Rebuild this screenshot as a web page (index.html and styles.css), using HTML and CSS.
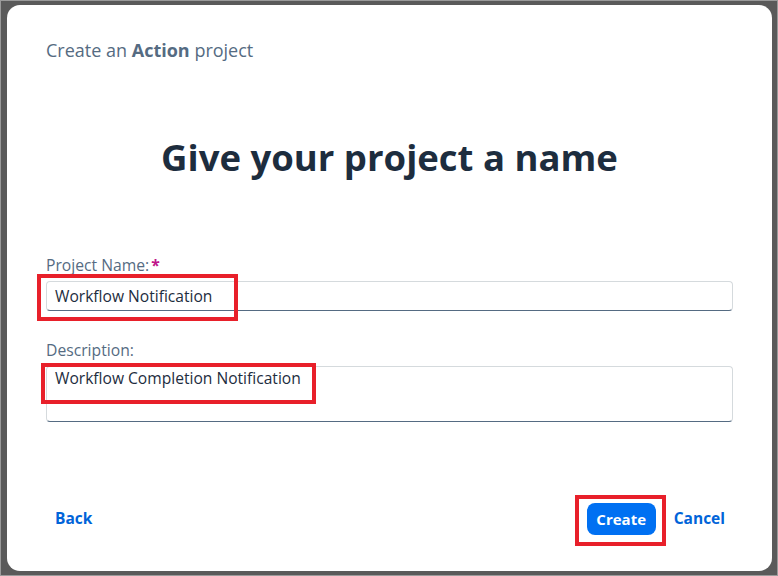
FILE: index.html
```html
<!DOCTYPE html>
<html lang="en">
<head>
<meta charset="utf-8">
<title>Create an Action project</title>
<link rel="stylesheet" href="styles.css">
</head>
<body>
<div class="frame">
  <div class="dialog">
    <div class="header">Create an <b>Action</b> project</div>
    <h1 class="title">Give your project a name</h1>
    <div class="form">
      <div class="field">
        <label class="label">Project Name:<span class="req">*</span></label>
        <div class="input">Workflow Notification</div>
        <span class="mark mark-name"></span>
      </div>
      <div class="field field-desc">
        <label class="label">Description:</label>
        <div class="textarea">Workflow Completion Notification</div>
        <span class="mark mark-desc"></span>
      </div>
    </div>
    <div class="footer">
      <a class="link back">Back</a>
      <div class="actions">
        <span class="create-wrap">
          <button class="btn-create">Create</button>
          <span class="mark mark-create"></span>
        </span>
        <a class="link cancel">Cancel</a>
      </div>
    </div>
  </div>
</div>
</body>
</html>
```
FILE: styles.css
```css
* { box-sizing: border-box; }
html, body { margin: 0; padding: 0; }
body {
  width: 778px;
  height: 576px;
  background: #5a5a5a;
  font-family: "Open Sans", "Liberation Sans", sans-serif;
}
.frame {
  height: 576px;
  border: 1px solid #9a9a9a;
  padding: 4px 5px 4px 6px;
}
.dialog {
  height: 100%;
  background: #fff;
  border-radius: 13px;
  padding: 35px 39px 0 39px;
  display: flex;
  flex-direction: column;
}
.header {
  font-size: 18px;
  line-height: 20px;
  color: #556b82;
}
.header b { font-weight: 700; }
.title {
  margin: 77px 0 0 0;
  text-align: center;
  font-size: 36.5px;
  line-height: 40px;
  font-weight: 700;
  color: #1d2d3e;
}
.form {
  margin-top: 79px;
  display: flex;
  flex-direction: column;
  gap: 30px;
}
.field { position: relative; display: flex; flex-direction: column; gap: 7px; }
.label {
  font-size: 15.7px;
  line-height: 18px;
  color: #556b82;
}
.req { color: #c0158a; font-weight: 700; margin-left: 2px; }
.input, .textarea {
  border: 1px solid #d5dadd;
  border-bottom-color: #556b82;
  border-radius: 4px;
  font-size: 15.6px;
  color: #1d2d3e;
  padding: 0 8px;
}
.input { height: 30px; line-height: 28px; }
.textarea { height: 56px; line-height: 22px; padding-top: 0; }
.mark {
  position: absolute;
  border: 4px solid #e8202a;
  pointer-events: none;
}
.mark-name { left: -9px; top: 18px; width: 201px; height: 47px; }
.mark-desc { left: -5px; top: 22px; width: 275px; height: 41px; }
.footer {
  margin-top: auto;
  margin-bottom: 36px;
  display: flex;
  align-items: center;
  justify-content: space-between;
  padding: 0 8px 0 9px;
}
.link {
  color: #0064d9;
  font-weight: 700;
  font-size: 15.5px;
  line-height: 20px;
}
.back { margin-top: -3px; }
.cancel { margin-top: -2px; }
.actions { display: flex; align-items: center; gap: 18px; }
.create-wrap { position: relative; display: inline-block; }
.btn-create {
  display: block;
  width: 69px;
  height: 32px;
  border: none;
  border-radius: 8px;
  background: #0070f2;
  color: #fff;
  font-family: inherit;
  font-weight: 700;
  font-size: 15px;
  padding: 0;
}
.mark-create { left: -12px; top: -8px; width: 91px; height: 51px; }
```
